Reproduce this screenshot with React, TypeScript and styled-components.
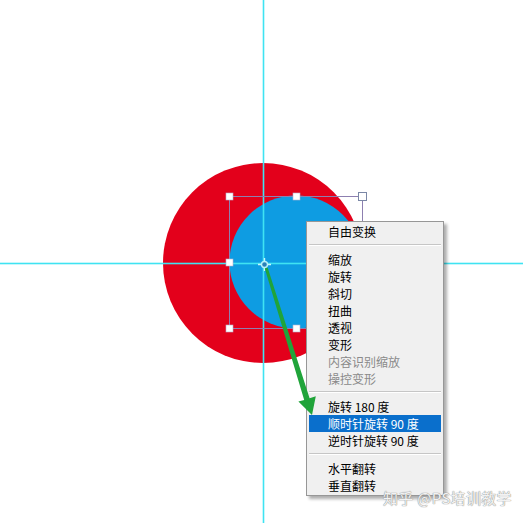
import React from 'react'

import styled, { createGlobalStyle } from 'styled-components'

const GlobalStyle = createGlobalStyle`
    html, body {
        margin: 0;
        padding: 0;
        background: #ffffff;
    }
    body {
        font-family: "Noto Sans CJK SC", "Liberation Sans", sans-serif;
    }
`

const Stage = styled.div`
    position: relative;
    width: 523px;
    height: 523px;
    overflow: hidden;
    background: #ffffff;
`

const Layer = styled.svg<{ $top?: boolean }>`
    position: absolute;
    left: 0;
    top: 0;
    width: 523px;
    height: 523px;
    pointer-events: none;
    z-index: ${({ $top }) => ($top ? 3 : 1)};
`

const Menu = styled.ul`
    position: absolute;
    left: 306px;
    top: 221px;
    z-index: 2;
    width: 138px;
    margin: 0;
    padding: 1px 0 1px;
    box-sizing: border-box;
    list-style: none;
    background: #f0f0f0;
    border: 1px solid #979797;
    box-shadow: 3px 3px 3px rgba(0, 0, 0, 0.32);
`

const Item = styled.li<{ $disabled?: boolean; $active?: boolean }>`
    height: 17px;
    margin: 0 2px;
    padding-left: 19px;
    display: flex;
    align-items: center;
    font-size: 12px;
    line-height: 17px;
    white-space: nowrap;
    color: ${({ $disabled, $active }) => ($active ? '#ffffff' : $disabled ? '#8a8a8a' : '#000000')};
    background: ${({ $active }) => ($active ? '#0a6fcc' : 'transparent')};
`

const Separator = styled.li`
    height: 1px;
    margin: 4px 2px 5px;
    background: #c6c6c6;
    border-bottom: 1px solid #ffffff;
`

const Watermark = styled.div`
    position: absolute;
    left: 383px;
    top: 487px;
    z-index: 4;
    font-size: 15px;
    letter-spacing: 0.3px;
    color: #f2f2f2;
    text-shadow: 0 0 1px #8a8a8a, 0 0 1px #8a8a8a;
`

type Entry = { label?: string; disabled?: boolean; active?: boolean; sep?: boolean }

const entries: Entry[] = [
    { label: '自由变换' },
    { sep: true },
    { label: '缩放' },
    { label: '旋转' },
    { label: '斜切' },
    { label: '扭曲' },
    { label: '透视' },
    { label: '变形' },
    { label: '内容识别缩放', disabled: true },
    { label: '操控变形', disabled: true },
    { sep: true },
    { label: '旋转 180 度' },
    { label: '顺时针旋转 90 度', active: true },
    { label: '逆时针旋转 90 度' },
    { sep: true },
    { label: '水平翻转' },
    { label: '垂直翻转' },
]

const handles: [number, number][] = [
    [229, 196],
    [296, 196],
    [229, 262],
    [229, 328],
    [296, 328],
]

function Artwork() {
    return (
        <Layer viewBox='0 0 523 523'>
            <circle cx='263' cy='263' r='100' fill='#e3001b' />
            <circle cx='296' cy='262' r='66.5' fill='#0e9ce2' />
            {/* guides */}
            <rect x='262.7' y='0' width='1.6' height='523' fill='#3fe3f2' />
            <rect x='0' y='262.7' width='523' height='1.6' fill='#3fe3f2' />
            <rect x='229.5' y='196.5' width='133' height='132' fill='none' stroke='#8d7fb0' strokeWidth='1' />
            {handles.map(([x, y]) => (
                <rect key={`${x}-${y}`} x={x - 3} y={y - 3} width='7' height='7' fill='#ffffff' stroke='#b7b0cc' strokeWidth='0.6' />
            ))}
            <rect x='358.5' y='192.5' width='8' height='8' fill='#ffffff' stroke='#7b87a6' strokeWidth='1' />
            {/* reference point */}
            <circle cx='264.5' cy='264.5' r='3' fill='#2a7fb8' stroke='#b8f2fa' strokeWidth='1.4' />
            <path d='M264.5 258v3 M264.5 268v3 M258 264.5h3 M268 264.5h3' stroke='#c9f6fb' strokeWidth='1.4' />
        </Layer>
    )
}

function Arrow() {
    return (
        <Layer $top viewBox='0 0 523 523'>
            <polygon
                points='264.8,268.5 267.6,267.6 309.6,398.2 315.8,396.2 312,415 298.4,401.5 304.2,400 '
                fill='#20a43a'
            />
        </Layer>
    )
}

function App() {
    return (
        <Stage>
            <GlobalStyle />
            <Artwork />
            <Menu>
                {entries.map((e, i) => e.sep
                    ? <Separator key={i} />
                    : <Item key={i} $disabled={e.disabled} $active={e.active}>{e.label}</Item>)}
            </Menu>
            <Arrow />
            <Watermark>知乎 @PS培训教学</Watermark>
        </Stage>
    )
}

export default App
